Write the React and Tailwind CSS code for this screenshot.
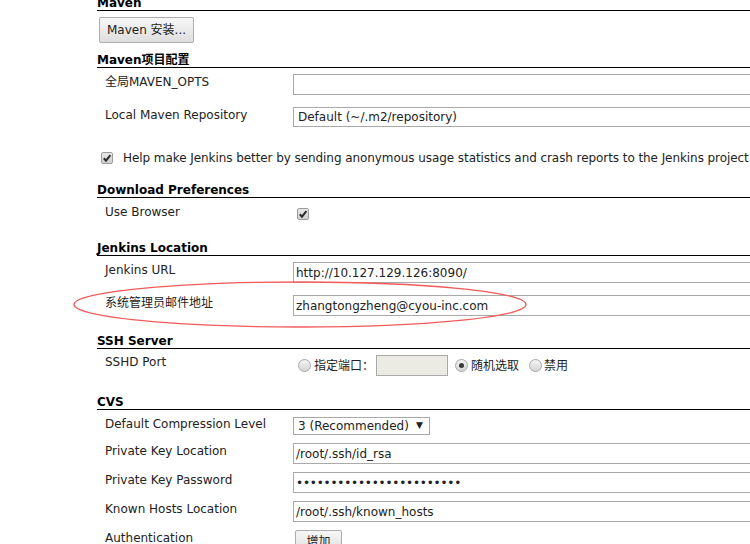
import React from "react";

const FONT = { fontFamily: '"DejaVu Sans", "Noto Sans CJK SC", sans-serif' };

function Header({ children, className = "" }) {
  return (
    <div className={"h-[15px] border-b border-black font-bold text-[12px] leading-[14px] text-black " + className}>
      {children}
    </div>
  );
}

function Check({ className = "" }) {
  return (
    <div className={"w-[12px] h-[12px] rounded-[2px] border border-[#9c9c9c] bg-gradient-to-b from-[#e8e8e8] to-[#cfcfcf] flex items-center justify-center " + className}>
      <svg width="10" height="10" viewBox="0 0 10 10">
        <path d="M1.8 5.2 L4 7.6 L8.4 2.2" fill="none" stroke="#2a2a2a" strokeWidth="2" />
      </svg>
    </div>
  );
}

function Radio({ on = false }) {
  return (
    <div className="w-[13px] h-[13px] rounded-full border border-[#a8a8a8] bg-gradient-to-b from-[#f4f4f4] to-[#d4d4d4] flex items-center justify-center">
      {on && <div className="w-[5px] h-[5px] rounded-full bg-[#3a3a3a]" />}
    </div>
  );
}

function Label({ children, className = "" }) {
  return <div className={"w-[196px] shrink-0 pl-[8px] text-[12px] leading-[14px] text-[#222] " + className}>{children}</div>;
}

function TextBox({ children, className = "" }) {
  return (
    <div className={"flex-1 border border-[#a9a9a9] bg-white pl-[2px] text-[12px] text-[#222] flex items-center " + className}>
      {children}
    </div>
  );
}

export default function App() {
  return (
    <div className="relative w-[750px] h-[544px] overflow-hidden bg-white" style={FONT}>
      <div className="w-[820px] pl-[97px]">
        <Header className="-mt-[4px]">Maven</Header>
        <div className="mt-[6px] ml-[2px] w-[95px] h-[26px] rounded-[2px] border border-[#adadad] bg-gradient-to-b from-[#f7f7f7] to-[#dedede] flex items-center justify-center text-[12px] text-[#222]">
          Maven 安装...
        </div>

        <Header className="mt-[10px]">Maven项目配置</Header>
        <div className="mt-[6px] flex h-[21px]">
          <Label className="pt-[1px]">全局MAVEN_OPTS</Label>
          <TextBox className="h-[21px]"></TextBox>
        </div>
        <div className="mt-[12px] flex h-[20px]">
          <Label className="pt-[1px]">Local Maven Repository</Label>
          <TextBox className="h-[20px] pl-[4px]">Default (~/.m2/repository)</TextBox>
        </div>
        <div className="mt-[25px] flex items-start h-[12px] ml-[4px]">
          <Check />
          <div className="ml-[10px] text-[12px] leading-[14px] -mt-[1px] text-[#222] whitespace-nowrap tracking-[-0.07px]">
            Help make Jenkins better by sending anonymous usage statistics and crash reports to the Jenkins project.
          </div>
        </div>

        <Header className="mt-[19px]">Download Preferences</Header>
        <div className="mt-[7px] flex h-[15px]">
          <Label>Use Browser</Label>
          <Check className="mt-[3px] ml-[4px]" />
        </div>

        <Header className="mt-[21px]">Jenkins Location</Header>
        <div className="mt-[6px] flex h-[21px]">
          <Label className="pt-[1px]">Jenkins URL</Label>
          <TextBox className="h-[21px]">http://10.127.129.126:8090/</TextBox>
        </div>
        <div className="mt-[12px] flex h-[21px]">
          <Label className="pt-[1px]">系统管理员邮件地址</Label>
          <TextBox className="h-[21px]">zhangtongzheng@cyou-inc.com</TextBox>
        </div>

        <Header className="mt-[18px]">SSH Server</Header>
        <div className="mt-[6px] flex h-[21px]">
          <Label>SSHD Port</Label>
          <div className="flex items-center h-[21px] text-[12px] text-[#222]">
            <div className="ml-[5px]"><Radio /></div>
            <span className="ml-[3px]">指定端口：</span>
            <div className="ml-[2px] w-[72px] h-[21px] border border-[#a9a9a9] bg-[#ebebe4]" />
            <div className="ml-[7px]"><Radio on /></div>
            <span className="ml-[3px]">随机选取</span>
            <div className="ml-[10px]"><Radio /></div>
            <span className="ml-[2px]">禁用</span>
          </div>
        </div>

        <Header className="mt-[19px]">CVS</Header>
        <div className="mt-[7px] flex h-[18px]">
          <Label>Default Compression Level</Label>
          <div className="w-[137px] h-[18px] border border-[#a9a9a9] flex items-center justify-between pl-[4px] pr-[6px] text-[12px] text-[#222]">
            <span>3 (Recommended)</span>
            <span className="text-[9px]">▼</span>
          </div>
        </div>
        <div className="mt-[8px] flex h-[21px]">
          <Label className="pt-[1px]">Private Key Location</Label>
          <TextBox className="h-[21px]">/root/.ssh/id_rsa</TextBox>
        </div>
        <div className="mt-[8px] flex h-[21px]">
          <Label className="pt-[1px]">Private Key Password</Label>
          <TextBox className="h-[21px] tracking-[-0.2px]">••••••••••••••••••••••••</TextBox>
        </div>
        <div className="mt-[8px] flex h-[21px]">
          <Label className="pt-[1px]">Known Hosts Location</Label>
          <TextBox className="h-[21px]">/root/.ssh/known_hosts</TextBox>
        </div>
        <div className="mt-[8px] flex h-[24px]">
          <Label className="pt-[1px]">Authentication</Label>
          <div className="ml-[2px] w-[47px] h-[24px] rounded-[2px] border border-[#adadad] bg-gradient-to-b from-[#f7f7f7] to-[#dedede] flex items-center justify-center text-[12px] text-[#222]">
            增加
          </div>
        </div>
      </div>

      <svg className="absolute left-[72px] top-[281px] pointer-events-none" width="456" height="48" viewBox="0 0 456 48">
        <ellipse cx="228" cy="23.5" rx="226" ry="22.5" fill="none" stroke="#f25a5a" strokeWidth="1.3" />
      </svg>
    </div>
  );
}
